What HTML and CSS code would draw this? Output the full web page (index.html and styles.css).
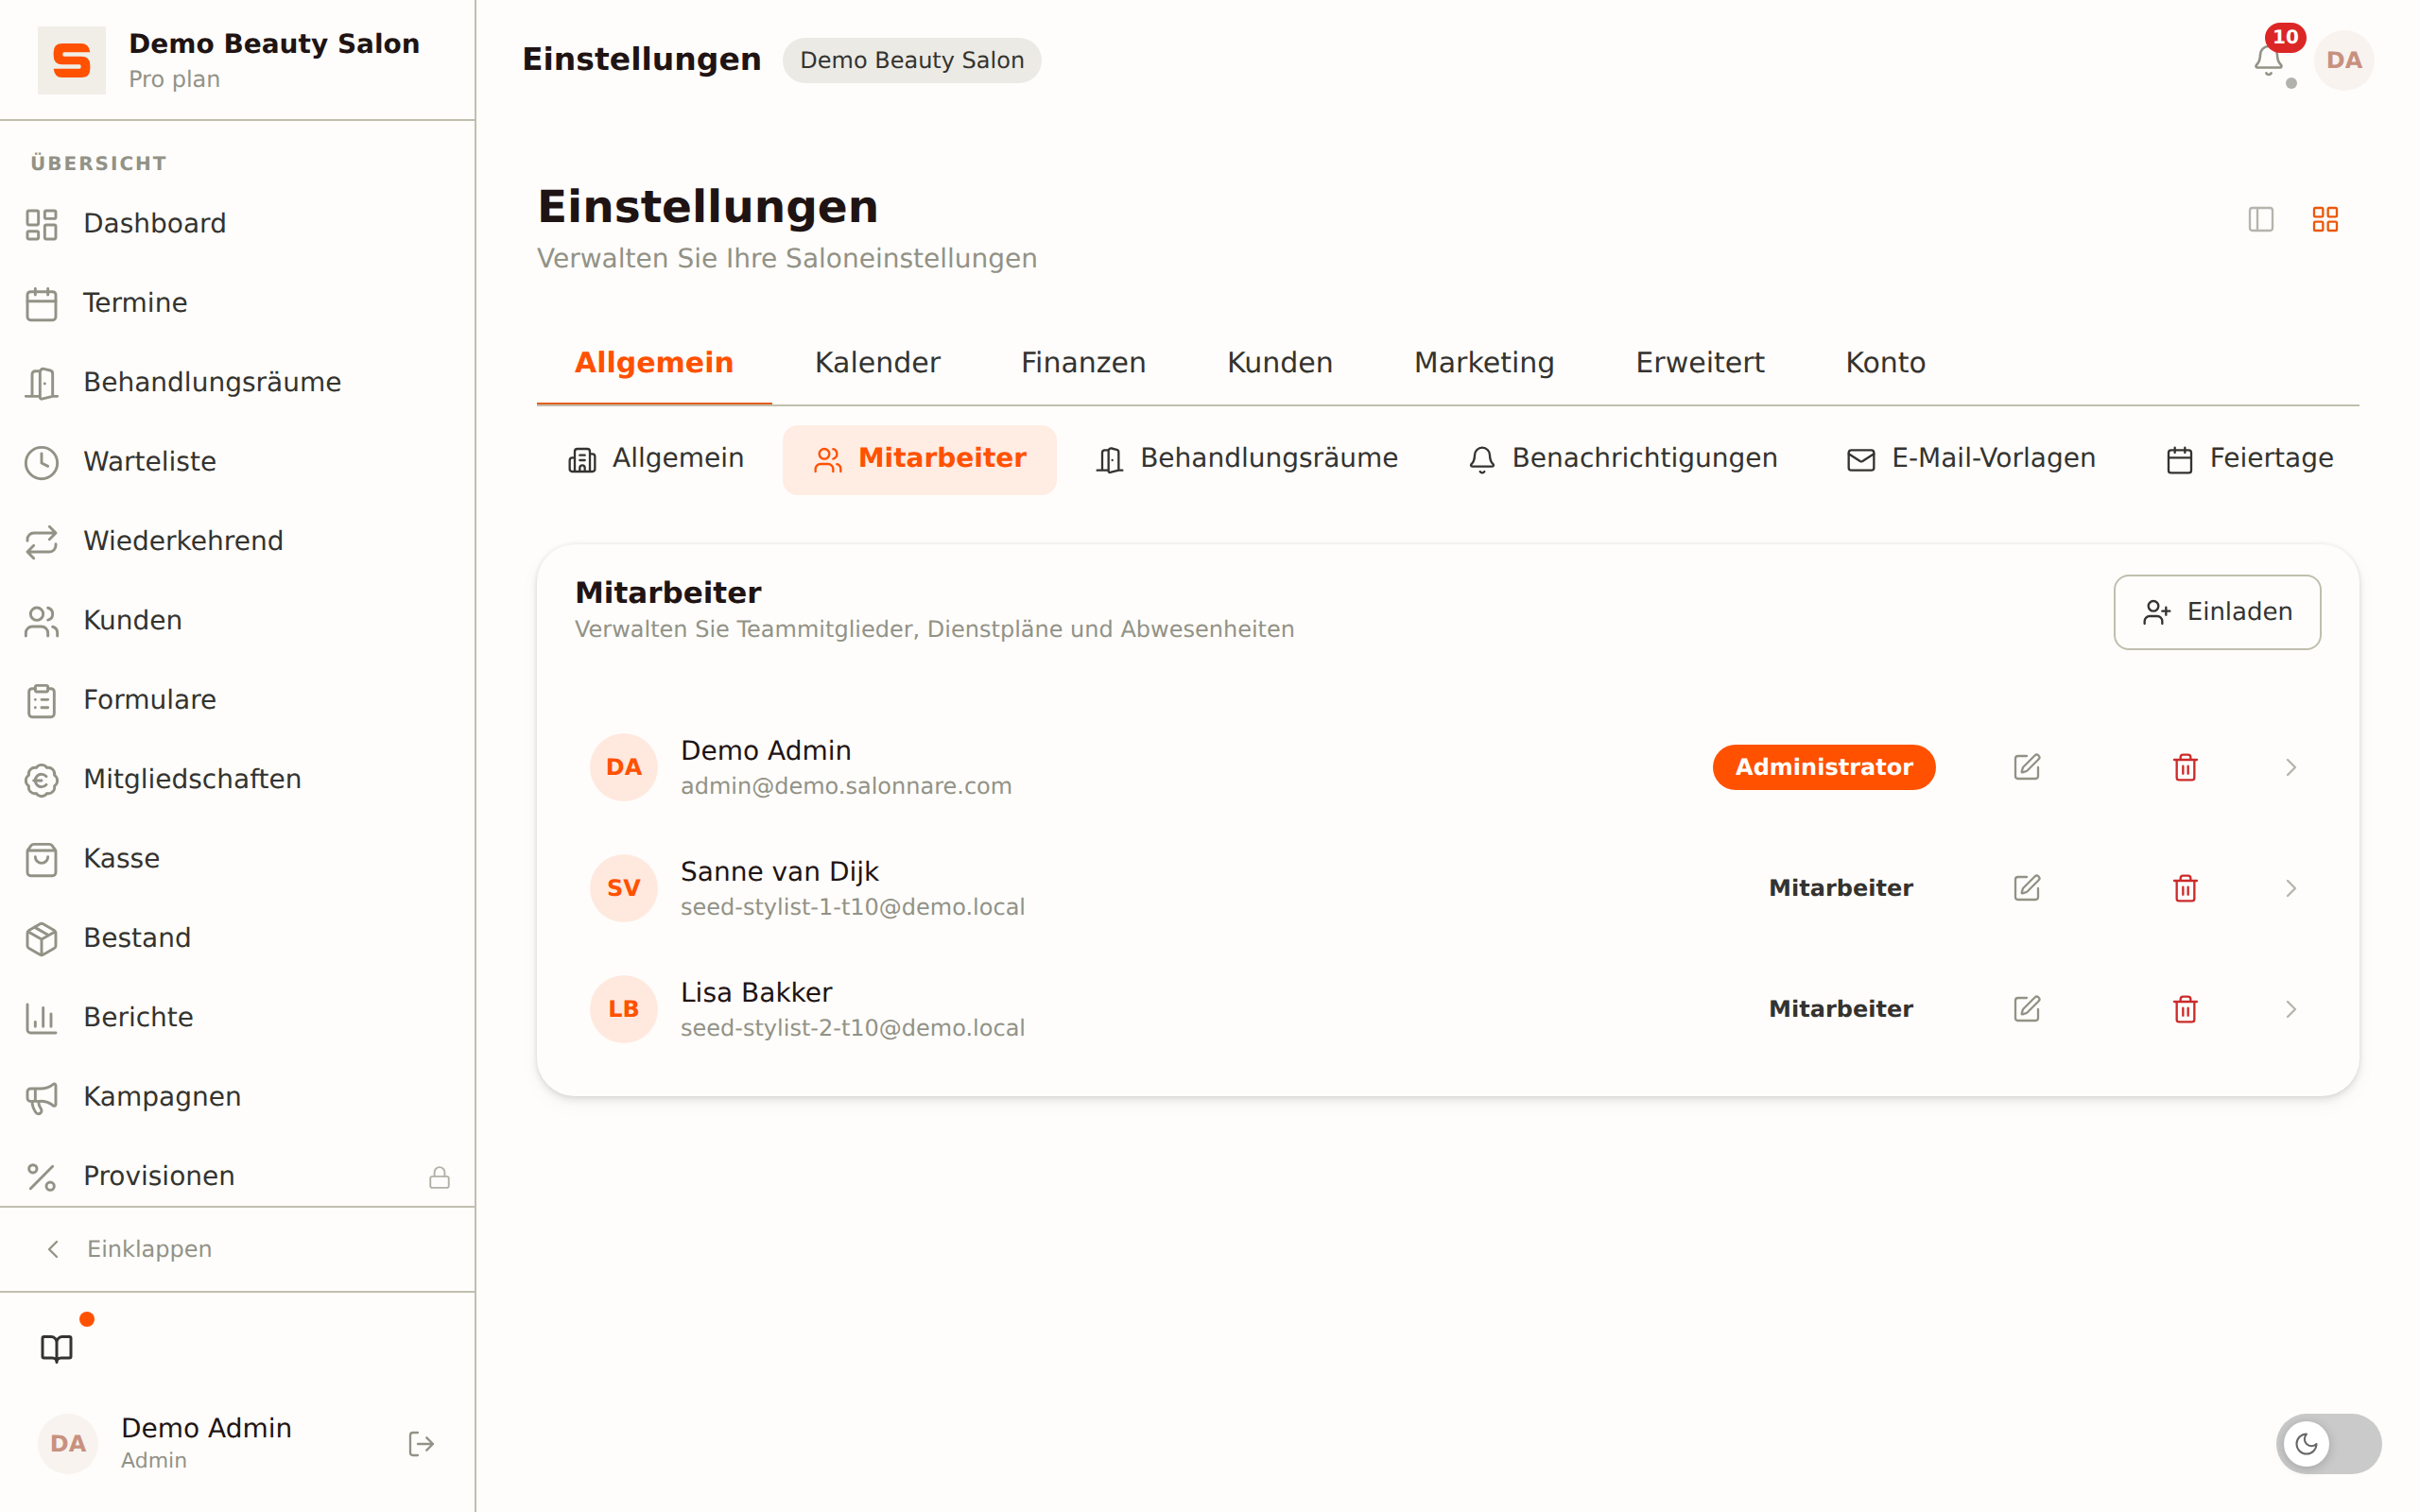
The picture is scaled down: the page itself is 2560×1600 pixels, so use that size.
FILE: index.html
```
<!DOCTYPE html>
<html lang="de">
<head>
    <meta charset="UTF-8">
    <meta name="viewport" content="width=device-width, initial-scale=1.0">
    <title>Einstellungen</title>
    <link rel="stylesheet" href="styles.css">
</head>
<body>
    <!-- icon set -->
    <svg class="sprite" aria-hidden="true">
        <symbol id="i-dashboard" viewBox="0 0 24 24"><rect x="3" y="3" width="7" height="9" rx="1"/><rect x="14" y="3" width="7" height="5" rx="1"/><rect x="14" y="12" width="7" height="9" rx="1"/><rect x="3" y="16" width="7" height="5" rx="1"/></symbol>
        <symbol id="i-calendar" viewBox="0 0 24 24"><path d="M8 2v4M16 2v4M3 10h18"/><rect x="3" y="4" width="18" height="18" rx="2"/></symbol>
        <symbol id="i-door" viewBox="0 0 24 24"><path d="M11 20H2M11 4.562v16.157a1 1 0 0 0 1.242.97L19 20V5.562a2 2 0 0 0-1.515-1.94l-4-1A2 2 0 0 0 11 4.561zM11 4H8a2 2 0 0 0-2 2v14M14 12h.01M22 20h-3"/></symbol>
        <symbol id="i-clock" viewBox="0 0 24 24"><circle cx="12" cy="12" r="10"/><path d="M12 6v6l4 2"/></symbol>
        <symbol id="i-repeat" viewBox="0 0 24 24"><path d="m17 2 4 4-4 4M3 11v-1a4 4 0 0 1 4-4h14M7 22l-4-4 4-4M21 13v1a4 4 0 0 1-4 4H3"/></symbol>
        <symbol id="i-users" viewBox="0 0 24 24"><path d="M16 21v-2a4 4 0 0 0-4-4H6a4 4 0 0 0-4 4v2M22 21v-2a4 4 0 0 0-3-3.87M16 3.13a4 4 0 0 1 0 7.75"/><circle cx="9" cy="7" r="4"/></symbol>
        <symbol id="i-clipboard" viewBox="0 0 24 24"><rect x="8" y="2" width="8" height="4" rx="1"/><path d="M16 4h2a2 2 0 0 1 2 2v14a2 2 0 0 1-2 2H6a2 2 0 0 1-2-2V6a2 2 0 0 1 2-2h2M12 11h4M12 16h4M8 11h.01M8 16h.01"/></symbol>
        <symbol id="i-euro" viewBox="0 0 24 24"><path d="M3.85 8.62a4 4 0 0 1 4.78-4.77 4 4 0 0 1 6.74 0 4 4 0 0 1 4.78 4.78 4 4 0 0 1 0 6.74 4 4 0 0 1-4.77 4.78 4 4 0 0 1-6.75 0 4 4 0 0 1-4.78-4.77 4 4 0 0 1 0-6.76ZM7 12h5M15 9.4a4 4 0 1 0 0 5.2"/></symbol>
        <symbol id="i-bag" viewBox="0 0 24 24"><path d="M16 10a4 4 0 0 1-8 0M3.103 6.034h17.794M3.4 5.467a2 2 0 0 0-.4 1.2V20a2 2 0 0 0 2 2h14a2 2 0 0 0 2-2V6.667a2 2 0 0 0-.4-1.2l-2-2.667A2 2 0 0 0 17 2H7a2 2 0 0 0-1.6.8z"/></symbol>
        <symbol id="i-package" viewBox="0 0 24 24"><path d="M11 21.73a2 2 0 0 0 2 0l7-4A2 2 0 0 0 21 16V8a2 2 0 0 0-1-1.73l-7-4a2 2 0 0 0-2 0l-7 4A2 2 0 0 0 3 8v8a2 2 0 0 0 1 1.73zM12 22V12M3.29 7 12 12l8.71-5M7.5 4.27l9 5.15"/></symbol>
        <symbol id="i-chart" viewBox="0 0 24 24"><path d="M3 3v16a2 2 0 0 0 2 2h16M18 17V9M13 17V5M8 17v-3"/></symbol>
        <symbol id="i-megaphone" viewBox="0 0 24 24"><path d="M11 6a13 13 0 0 0 8.4-2.8A1 1 0 0 1 21 4v12a1 1 0 0 1-1.6.8A13 13 0 0 0 11 14H5a2 2 0 0 1-2-2V8a2 2 0 0 1 2-2zM6 14a12 12 0 0 0 2.4 7.2 2 2 0 0 0 3.2-2.4A8 8 0 0 1 10 14M8 6v8"/></symbol>
        <symbol id="i-percent" viewBox="0 0 24 24"><path d="M19 5 5 19"/><circle cx="6.5" cy="6.5" r="2.5"/><circle cx="17.5" cy="17.5" r="2.5"/></symbol>
        <symbol id="i-lock" viewBox="0 0 24 24"><rect x="3" y="11" width="18" height="11" rx="2"/><path d="M7 11V7a5 5 0 0 1 10 0v4"/></symbol>
        <symbol id="i-left" viewBox="0 0 24 24"><path d="m15 18-6-6 6-6"/></symbol>
        <symbol id="i-right" viewBox="0 0 24 24"><path d="m9 18 6-6-6-6"/></symbol>
        <symbol id="i-book" viewBox="0 0 24 24"><path d="M12 7v14M3 18a1 1 0 0 1-1-1V4a1 1 0 0 1 1-1h5a4 4 0 0 1 4 4 4 4 0 0 1 4-4h5a1 1 0 0 1 1 1v13a1 1 0 0 1-1 1h-6a3 3 0 0 0-3 3 3 3 0 0 0-3-3z"/></symbol>
        <symbol id="i-logout" viewBox="0 0 24 24"><path d="m16 17 5-5-5-5M21 12H9M9 21H5a2 2 0 0 1-2-2V5a2 2 0 0 1 2-2h4"/></symbol>
        <symbol id="i-bell" viewBox="0 0 24 24"><path d="M10.268 21a2 2 0 0 0 3.464 0M3.262 15.326A1 1 0 0 0 4 17h16a1 1 0 0 0 .74-1.673C19.41 13.956 18 12.499 18 8A6 6 0 0 0 6 8c0 4.499-1.411 5.956-2.738 7.326"/></symbol>
        <symbol id="i-panel" viewBox="0 0 24 24"><rect x="3" y="3" width="18" height="18" rx="2"/><path d="M9 3v18"/></symbol>
        <symbol id="i-grid" viewBox="0 0 24 24"><rect x="3" y="3" width="7" height="7" rx="1"/><rect x="14" y="3" width="7" height="7" rx="1"/><rect x="14" y="14" width="7" height="7" rx="1"/><rect x="3" y="14" width="7" height="7" rx="1"/></symbol>
        <symbol id="i-building" viewBox="0 0 24 24"><path d="M10 12h4M10 8h4M14 21v-3a2 2 0 0 0-4 0v3M6 10H4a2 2 0 0 0-2 2v7a2 2 0 0 0 2 2h16a2 2 0 0 0 2-2V9a2 2 0 0 0-2-2h-2M6 21V5a2 2 0 0 1 2-2h8a2 2 0 0 1 2 2v16"/></symbol>
        <symbol id="i-mail" viewBox="0 0 24 24"><path d="m22 7-8.991 5.727a2 2 0 0 1-2.009 0L2 7"/><rect x="2" y="4" width="20" height="16" rx="2"/></symbol>
        <symbol id="i-invite" viewBox="0 0 24 24"><path d="M16 21v-2a4 4 0 0 0-4-4H6a4 4 0 0 0-4 4v2M19 8v6M22 11h-6"/><circle cx="9" cy="7" r="4"/></symbol>
        <symbol id="i-edit" viewBox="0 0 24 24"><path d="M12 3H5a2 2 0 0 0-2 2v14a2 2 0 0 0 2 2h14a2 2 0 0 0 2-2v-7M18.375 2.625a1 1 0 0 1 3 3l-9.013 9.014a2 2 0 0 1-.853.505l-2.873.84a.5.5 0 0 1-.62-.62l.84-2.873a2 2 0 0 1 .506-.852z"/></symbol>
        <symbol id="i-trash" viewBox="0 0 24 24"><path d="M3 6h18M19 6v14a2 2 0 0 1-2 2H7a2 2 0 0 1-2-2V6M8 6V4a2 2 0 0 1 2-2h4a2 2 0 0 1 2 2v2M10 11v6M14 11v6"/></symbol>
        <symbol id="i-moon" viewBox="0 0 24 24"><path d="M12 3a6 6 0 0 0 9 9 9 9 0 1 1-9-9Z"/></symbol>
    </svg>

    <div class="app">
        <aside class="sidebar">
            <div class="brand">
                <svg class="brand-logo" viewBox="0 0 216 216" role="img" aria-label="Logo">
                    <rect width="216" height="216" fill="#f0eee7"/>
                    <path fill="#ff5100" d="M78 54H138Q162 54 166 82H84Q79 82 79 87V90Q79 95 84 95H138Q166 95 166 123V134Q166 162 138 162H76Q54 162 50 134H132Q137 134 137 129V126Q137 121 132 121H78Q50 121 50 93V82Q50 54 78 54Z"/>
                </svg>
                <div>
                    <div class="brand-name">Demo Beauty Salon</div>
                    <div class="brand-plan">Pro plan</div>
                </div>
            </div>

            <nav class="nav">
                <div class="nav-label">Übersicht</div>
                <a class="nav-item" href="#"><svg class="icon"><use href="#i-dashboard"/></svg><span>Dashboard</span></a>
                <a class="nav-item" href="#"><svg class="icon"><use href="#i-calendar"/></svg><span>Termine</span></a>
                <a class="nav-item" href="#"><svg class="icon"><use href="#i-door"/></svg><span>Behandlungsräume</span></a>
                <a class="nav-item" href="#"><svg class="icon"><use href="#i-clock"/></svg><span>Warteliste</span></a>
                <a class="nav-item" href="#"><svg class="icon"><use href="#i-repeat"/></svg><span>Wiederkehrend</span></a>
                <a class="nav-item" href="#"><svg class="icon"><use href="#i-users"/></svg><span>Kunden</span></a>
                <a class="nav-item" href="#"><svg class="icon"><use href="#i-clipboard"/></svg><span>Formulare</span></a>
                <a class="nav-item" href="#"><svg class="icon"><use href="#i-euro"/></svg><span>Mitgliedschaften</span></a>
                <a class="nav-item" href="#"><svg class="icon"><use href="#i-bag"/></svg><span>Kasse</span></a>
                <a class="nav-item" href="#"><svg class="icon"><use href="#i-package"/></svg><span>Bestand</span></a>
                <a class="nav-item" href="#"><svg class="icon"><use href="#i-chart"/></svg><span>Berichte</span></a>
                <a class="nav-item" href="#"><svg class="icon"><use href="#i-megaphone"/></svg><span>Kampagnen</span></a>
                <a class="nav-item" href="#"><svg class="icon"><use href="#i-percent"/></svg><span>Provisionen</span><svg class="icon nav-lock"><use href="#i-lock"/></svg></a>
            </nav>

            <button class="collapse" type="button"><svg class="icon"><use href="#i-left"/></svg>Einklappen</button>

            <div class="sidebar-footer">
                <button class="guide" type="button" aria-label="Handbuch">
                    <svg class="icon"><use href="#i-book"/></svg>
                    <span class="guide-dot"></span>
                </button>
                <div class="user">
                    <div class="avatar avatar-muted">DA</div>
                    <div class="user-text">
                        <div class="user-name">Demo Admin</div>
                        <div class="user-role">Admin</div>
                    </div>
                    <button class="logout" type="button" aria-label="Abmelden"><svg class="icon"><use href="#i-logout"/></svg></button>
                </div>
            </div>
        </aside>

        <div class="main">
            <header class="topbar">
                <div class="topbar-title">Einstellungen</div>
                <span class="salon-pill">Demo Beauty Salon</span>
                <div class="topbar-right">
                    <button class="bell" type="button" aria-label="Benachrichtigungen">
                        <svg class="icon"><use href="#i-bell"/></svg>
                        <span class="bell-count">10</span>
                        <span class="bell-dot"></span>
                    </button>
                    <button class="avatar avatar-muted" type="button">DA</button>
                </div>
            </header>

            <main class="content">
                <div class="page-head">
                    <div>
                        <h1>Einstellungen</h1>
                        <p>Verwalten Sie Ihre Saloneinstellungen</p>
                    </div>
                    <div class="view-switch">
                        <button type="button" aria-label="Seitenleiste"><svg class="icon"><use href="#i-panel"/></svg></button>
                        <button class="active" type="button" aria-label="Raster"><svg class="icon"><use href="#i-grid"/></svg></button>
                    </div>
                </div>

                <nav class="tabs">
                    <a class="tab active" href="#">Allgemein</a>
                    <a class="tab" href="#">Kalender</a>
                    <a class="tab" href="#">Finanzen</a>
                    <a class="tab" href="#">Kunden</a>
                    <a class="tab" href="#">Marketing</a>
                    <a class="tab" href="#">Erweitert</a>
                    <a class="tab" href="#">Konto</a>
                </nav>

                <nav class="subtabs">
                    <a class="subtab" href="#"><svg class="icon"><use href="#i-building"/></svg><span>Allgemein</span></a>
                    <a class="subtab active" href="#"><svg class="icon"><use href="#i-users"/></svg><span>Mitarbeiter</span></a>
                    <a class="subtab" href="#"><svg class="icon"><use href="#i-door"/></svg><span>Behandlungsräume</span></a>
                    <a class="subtab" href="#"><svg class="icon"><use href="#i-bell"/></svg><span>Benachrichtigungen</span></a>
                    <a class="subtab" href="#"><svg class="icon"><use href="#i-mail"/></svg><span>E-Mail-Vorlagen</span></a>
                    <a class="subtab" href="#"><svg class="icon"><use href="#i-calendar"/></svg><span>Feiertage</span></a>
                </nav>

                <section class="card">
                    <div class="card-head">
                        <div>
                            <h2>Mitarbeiter</h2>
                            <p>Verwalten Sie Teammitglieder, Dienstpläne und Abwesenheiten</p>
                        </div>
                        <button class="invite" type="button"><svg class="icon"><use href="#i-invite"/></svg>Einladen</button>
                    </div>

                    <ul class="members">
                        <li class="member">
                            <div class="avatar avatar-orange">DA</div>
                            <div class="member-text">
                                <div class="member-name">Demo Admin</div>
                                <div class="member-mail">admin@demo.salonnare.com</div>
                            </div>
                            <span class="role role-admin">Administrator</span>
                            <div class="member-actions">
                                <button type="button" aria-label="Bearbeiten"><svg class="icon"><use href="#i-edit"/></svg></button>
                                <button class="delete" type="button" aria-label="Löschen"><svg class="icon"><use href="#i-trash"/></svg></button>
                            </div>
                            <svg class="icon member-arrow"><use href="#i-right"/></svg>
                        </li>
                        <li class="member">
                            <div class="avatar avatar-orange">SV</div>
                            <div class="member-text">
                                <div class="member-name">Sanne van Dijk</div>
                                <div class="member-mail">seed-stylist-1-t10@demo.local</div>
                            </div>
                            <span class="role">Mitarbeiter</span>
                            <div class="member-actions">
                                <button type="button" aria-label="Bearbeiten"><svg class="icon"><use href="#i-edit"/></svg></button>
                                <button class="delete" type="button" aria-label="Löschen"><svg class="icon"><use href="#i-trash"/></svg></button>
                            </div>
                            <svg class="icon member-arrow"><use href="#i-right"/></svg>
                        </li>
                        <li class="member">
                            <div class="avatar avatar-orange">LB</div>
                            <div class="member-text">
                                <div class="member-name">Lisa Bakker</div>
                                <div class="member-mail">seed-stylist-2-t10@demo.local</div>
                            </div>
                            <span class="role">Mitarbeiter</span>
                            <div class="member-actions">
                                <button type="button" aria-label="Bearbeiten"><svg class="icon"><use href="#i-edit"/></svg></button>
                                <button class="delete" type="button" aria-label="Löschen"><svg class="icon"><use href="#i-trash"/></svg></button>
                            </div>
                            <svg class="icon member-arrow"><use href="#i-right"/></svg>
                        </li>
                    </ul>
                </section>
            </main>
        </div>
    </div>

    <label class="theme">
        <input type="checkbox" aria-label="Dunkles Design">
        <span class="theme-knob"><svg class="icon"><use href="#i-moon"/></svg></span>
    </label>
</body>
</html>
```
FILE: styles.css
```
:root {
    --bg: #fefdfb;
    --line: #c0bfae;
    --ink: #1f1413;
    --text: #34332f;
    --muted: #929286;
    --orange: #ff5100;
    --red: #cc2a2a;
}
* {
    margin: 0;
    padding: 0;
    box-sizing: border-box;
}
body {
    background: var(--bg);
    color: var(--text);
    font-family: "DejaVu Sans", sans-serif;
    font-size: 28px;
    text-rendering: geometricPrecision;
}
button {
    background: none;
    border: none;
    font: inherit;
    color: inherit;
    text-rendering: inherit;
    cursor: pointer;
}
a {
    color: inherit;
    text-decoration: none;
}
.sprite {
    display: none;
}
.icon {
    display: block;
    flex: none;
    width: 32px;
    height: 32px;
    fill: none;
    stroke: currentColor;
    stroke-width: 1.75;
    stroke-linecap: round;
    stroke-linejoin: round;
}
.app {
    display: flex;
    height: 100vh;
}

/* sidebar */
.sidebar {
    display: flex;
    flex-direction: column;
    flex: none;
    width: 504px;
    border-right: 2px solid var(--line);
}
.brand {
    display: flex;
    align-items: center;
    gap: 24px;
    height: 128px;
    padding: 2px 40px 0;
    border-bottom: 2px solid var(--line);
}
.brand-logo {
    width: 72px;
    height: 72px;
}
.brand-name {
    padding-top: 2px;
    color: var(--ink);
    font-weight: bold;
    line-height: 38px;
    white-space: nowrap;
}
.brand-plan {
    color: var(--muted);
    font-size: 24px;
    line-height: 36px;
}
.nav {
    display: flex;
    flex-direction: column;
    flex: 1;
    gap: 4px;
    min-height: 0;
    padding: 24px 8px 0;
    overflow: hidden;
}
.nav-label {
    flex: none;
    padding: 7px 24px;
    color: var(--muted);
    font-size: 20px;
    font-weight: bold;
    letter-spacing: 2px;
    line-height: 28px;
    text-transform: uppercase;
}
.nav-item {
    display: flex;
    flex: none;
    align-items: center;
    gap: 24px;
    height: 80px;
    padding: 0 16px;
}
.nav-item span {
    flex: 1;
    padding-bottom: 4px;
}
.nav-item .icon {
    width: 40px;
    height: 40px;
    color: var(--muted);
}
.nav-item .nav-lock {
    width: 26px;
    height: 26px;
    opacity: .7;
}
.collapse {
    display: flex;
    flex: none;
    align-items: center;
    gap: 20px;
    height: 90px;
    padding: 0 40px;
    border-top: 2px solid var(--line);
    color: var(--muted);
    font-size: 24px;
}
.sidebar-footer {
    flex: none;
    padding: 20px 20px 12px;
    border-top: 2px solid var(--line);
}
.guide {
    position: relative;
    display: flex;
    align-items: center;
    justify-content: center;
    width: 80px;
    height: 80px;
}
.guide .icon {
    width: 36px;
    height: 36px;
    stroke-width: 2;
}
.guide-dot {
    position: absolute;
    top: 0;
    right: 0;
    width: 16px;
    height: 16px;
    border-radius: 50%;
    background: var(--orange);
}
.user {
    display: flex;
    align-items: center;
    gap: 24px;
    height: 120px;
    padding-left: 20px;
}
.user-text {
    flex: 1;
    padding-top: 2px;
}
.user-name {
    color: var(--ink);
    line-height: 36px;
}
.user-role {
    color: var(--muted);
    font-size: 22px;
    line-height: 34px;
}
.logout {
    display: flex;
    align-items: center;
    justify-content: center;
    width: 72px;
    height: 72px;
    color: var(--muted);
}
.avatar {
    display: flex;
    flex: none;
    align-items: center;
    justify-content: center;
    border-radius: 50%;
    font-size: 24px;
    font-weight: bold;
}
.avatar-muted {
    width: 64px;
    height: 64px;
    background: #f8f3ef;
    color: #c8917f;
}
.avatar-orange {
    width: 72px;
    height: 72px;
    background: #ffe9df;
    color: var(--orange);
}

/* top bar */
.main {
    flex: 1;
    min-width: 0;
    overflow: hidden;
}
.topbar {
    display: flex;
    align-items: center;
    gap: 22px;
    height: 128px;
    padding: 0 48px;
}
.topbar-title {
    padding-bottom: 4px;
    color: var(--ink);
    font-size: 33px;
    font-weight: bold;
}
.salon-pill {
    height: 48px;
    padding: 0 18px;
    border-radius: 24px;
    background: #ebeae5;
    font-size: 24px;
    line-height: 48px;
}
.topbar-right {
    display: flex;
    align-items: center;
    gap: 8px;
    margin-left: auto;
}
.bell {
    position: relative;
    display: flex;
    align-items: center;
    justify-content: center;
    width: 80px;
    height: 80px;
    color: var(--muted);
}
.bell .icon {
    width: 36px;
    height: 36px;
}
.bell-count {
    position: absolute;
    top: 0;
    right: 0;
    width: 44px;
    height: 32px;
    border-radius: 16px;
    background: #dc2626;
    color: #fff;
    font-size: 20px;
    font-weight: bold;
    line-height: 30px;
    text-align: center;
}
.bell-dot {
    position: absolute;
    right: 10px;
    bottom: 10px;
    width: 12px;
    height: 12px;
    border-radius: 50%;
    background: #b2b2ac;
}

/* page */
.content {
    padding: 64px;
}
.page-head {
    display: flex;
    justify-content: space-between;
    margin-bottom: 46px;
}
h1 {
    color: var(--ink);
    font-size: 47px;
    line-height: 56px;
}
.page-head p {
    margin-top: 6px;
    color: var(--muted);
    line-height: 40px;
}
.view-switch {
    display: flex;
    align-items: flex-start;
    gap: 4px;
    padding: 8px 4px;
}
.view-switch button {
    display: flex;
    align-items: center;
    justify-content: center;
    width: 64px;
    height: 64px;
    color: #b5b5ae;
}
.view-switch .active {
    color: #ea580c;
}
.tabs {
    display: flex;
    gap: 5px;
    border-bottom: 2px solid var(--line);
}
.tab {
    padding: 25px 40px 21px;
    border-bottom: 2px solid transparent;
    font-size: 30px;
    line-height: 40px;
}
.tab.active {
    border-color: #e2601f;
    color: var(--orange);
    font-weight: bold;
}
.subtabs {
    display: flex;
    gap: 8px;
    margin: 20px 0 52px;
}
.subtab {
    display: flex;
    align-items: center;
    gap: 16px;
    height: 74px;
    padding: 0 32px;
    border-radius: 16px;
    white-space: nowrap;
}
.subtab span {
    padding-bottom: 6px;
}
.subtab.active {
    background: #ffece3;
    color: var(--orange);
    font-weight: bold;
}

/* staff card */
.card {
    padding: 32px 40px 40px;
    border-radius: 40px;
    background: var(--bg);
    box-shadow: 0 0 4px rgba(0, 0, 0, .08), 0 4px 8px rgba(0, 0, 0, .1), 0 8px 24px rgba(0, 0, 0, .03);
}
.card-head {
    display: flex;
    justify-content: space-between;
    margin-bottom: 72px;
}
h2 {
    color: var(--ink);
    font-size: 31px;
    line-height: 40px;
}
.card-head p {
    color: var(--muted);
    font-size: 24px;
    line-height: 36px;
}
.invite {
    display: flex;
    align-items: center;
    gap: 16px;
    height: 80px;
    padding: 0 28px;
    border: 2px solid var(--line);
    border-radius: 16px;
    font-size: 26px;
}
.members {
    display: flex;
    flex-direction: column;
    gap: 24px;
    list-style: none;
}
.member {
    display: flex;
    align-items: center;
    height: 104px;
    padding: 0 16px;
}
.member-text {
    flex: 1;
    margin-left: 24px;
    padding-top: 2px;
}
.member-name {
    color: var(--ink);
    line-height: 38px;
}
.member-mail {
    color: var(--muted);
    font-size: 24px;
    line-height: 36px;
}
.role {
    height: 48px;
    padding: 0 24px;
    border-radius: 24px;
    font-size: 24px;
    font-weight: bold;
    line-height: 48px;
}
.role-admin {
    background: var(--orange);
    color: #fff;
}
.member-actions {
    display: flex;
    gap: 8px;
    margin: 0 16px;
}
.member-actions button {
    display: flex;
    align-items: center;
    justify-content: center;
    width: 160px;
    height: 72px;
    color: var(--muted);
}
.member-actions .delete {
    color: var(--red);
}
.member-arrow {
    color: #b5b5ae;
}

/* dark mode switch, stays over the page */
.theme {
    position: fixed;
    right: 40px;
    bottom: 40px;
    width: 112px;
    height: 64px;
    padding: 8px;
    border-radius: 32px;
    background: #cacaca;
    cursor: pointer;
}
.theme input {
    position: absolute;
    opacity: 0;
}
.theme-knob {
    display: flex;
    align-items: center;
    justify-content: center;
    width: 48px;
    height: 48px;
    border-radius: 50%;
    background: #fff;
    box-shadow: 0 2px 12px rgba(0, 0, 0, .2);
    color: #666;
}
.theme-knob .icon {
    width: 28px;
    height: 28px;
}
.theme input:checked + .theme-knob {
    margin-left: 48px;
}
```
